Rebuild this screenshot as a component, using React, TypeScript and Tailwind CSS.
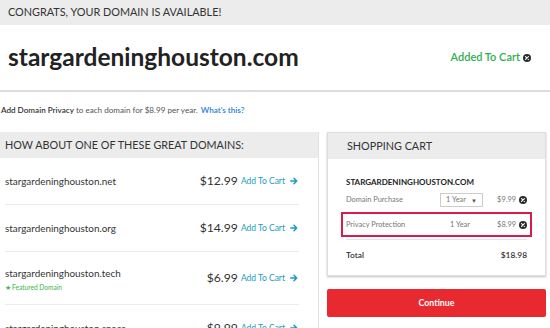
import React from "react";

const XIcon = ({ size = 10 }: { size?: number }) => (
  <svg width={size} height={size} viewBox="0 0 10 10">
    <circle cx="5" cy="5" r="5" fill="#2b2b2b" />
    <path d="M3.2 3.2 L6.8 6.8 M6.8 3.2 L3.2 6.8" stroke="#fff" strokeWidth="1.4" strokeLinecap="round" />
  </svg>
);

const Arrow = () => (
  <svg width="8" height="8" viewBox="0 0 8 8" className="ml-[5px]">
    <path d="M0.8 4 H6.6 M4 1.3 L6.7 4 L4 6.7" stroke="#1a9bbd" strokeWidth="1.5" fill="none" strokeLinecap="round" strokeLinejoin="round" />
  </svg>
);

const Row = ({ name, price, featured }: { name: string; price: string; featured?: boolean }) => (
  <div className={`ml-[5px] mr-[19px] flex items-center justify-between border-b border-[#ececec] ${featured ? "h-[53px]" : "h-[47px]"}`}>
    <div className={`flex flex-col ${featured ? "pt-[3px]" : ""}`}>
      <span className="text-[9.9px] leading-[13px] text-[#333]">{name}</span>
      {featured && (
        <span className="mt-[3px] flex items-center text-[6.6px] leading-[9px] text-[#3cb54a]">
          <span className="mr-[1px] text-[6.5px]">★</span>Featured Domain
        </span>
      )}
    </div>
    <div className="mr-[1px] flex items-center">
      <span className="text-[12.2px] text-[#333]">{price}</span>
      <span className="ml-[3px] text-[8.5px] text-[#1a9bbd]">Add To Cart</span>
      <Arrow />
    </div>
  </div>
);

export default function App() {
  return (
    <div className="h-[328px] w-[550px] overflow-hidden bg-white" style={{ fontFamily: "Lato, 'Noto Sans', sans-serif" }}>
      <div className="flex h-[25px] items-center bg-[#ececec] pl-[8px] text-[10.85px] text-[#333]">
        CONGRATS, YOUR DOMAIN IS AVAILABLE!
      </div>
      <div className="flex h-[67px] items-center justify-between border-b-2 border-[#dcdcdc] pl-[8px] pr-[19px]">
        <span className="text-[24.5px] font-bold text-[#222]">stargardeninghouston.com</span>
        <span className="flex items-center text-[11px] font-semibold text-[#2fae4e]">
          Added To Cart
          <span className="ml-[3px] flex"><XIcon size={8} /></span>
        </span>
      </div>
      <div className="flex h-[40px] items-center pb-[4px] pl-[1px] text-[8.1px] text-[#555]">
        <span className="font-semibold text-[#333]">Add Domain Privacy</span>
        <span className="ml-[2px]">to each domain for $8.99 per year.</span>
        <span className="ml-[3px] font-semibold text-[#2a7ed6]">What's this?</span>
      </div>
      <div className="flex items-start">
        <div className="h-[200px] w-[319px] border-r border-[#e2e2e2]">
          <div className="flex h-[26px] items-center bg-[#ececec] pl-[5px] text-[10.8px] text-[#333]">
            HOW ABOUT ONE OF THESE GREAT DOMAINS:
          </div>
          <Row name="stargardeninghouston.net" price="$12.99" />
          <Row name="stargardeninghouston.org" price="$14.99" />
          <Row name="stargardeninghouston.tech" price="$6.99" featured />
          <Row name="stargardeninghouston.space" price="$9.99" />
        </div>
        <div className="ml-[8px] w-[219px]">
          <div className="border border-[#dedede] shadow-[0_1px_2px_rgba(0,0,0,0.25)]">
            <div className="flex h-[26px] items-center bg-[#ececec] pl-[19px] text-[10.8px] text-[#333]">
              SHOPPING CART
            </div>
            <div className="px-[18px] pb-[14px] pt-[18px]">
              <div className="text-[8px] font-bold leading-[10px] text-[#222]">STARGARDENINGHOUSTON.COM</div>
              <div className="mt-[5px] flex h-[16px] items-center text-[7.4px] text-[#777]">
                <span className="w-[94px]">Domain Purchase</span>
                <span className="flex h-[14px] w-[43px] items-center justify-between border border-[#ccc] pl-[5px] pr-[5px]">
                  1 Year<span className="text-[6px] text-[#555]">▼</span>
                </span>
                <span className="ml-auto">$9.99</span>
                <span className="ml-[3px] flex"><XIcon size={8} /></span>
              </div>
              <div className="mx-[-5px] mt-[4px] flex h-[25px] items-center border-2 border-[#d81b4a] px-[3px] text-[7.4px] text-[#777]">
                <span className="w-[104px]">Privacy Protection</span>
                <span>1 Year</span>
                <span className="ml-auto">$8.99</span>
                <span className="ml-[3px] flex"><XIcon size={8} /></span>
              </div>
              <div className="mt-[2px] border-t border-[#e3e3e3]" />
              <div className="mt-[10px] flex items-center justify-between text-[8.4px] font-semibold leading-[11px] text-[#333]">
                <span>Total</span>
                <span>$18.98</span>
              </div>
            </div>
          </div>
          <div className="mt-[13px] flex h-[28px] items-center justify-center rounded-[2px] bg-[#e8292f] text-[8.8px] font-bold text-white">
            Continue
          </div>
        </div>
      </div>
    </div>
  );
}
